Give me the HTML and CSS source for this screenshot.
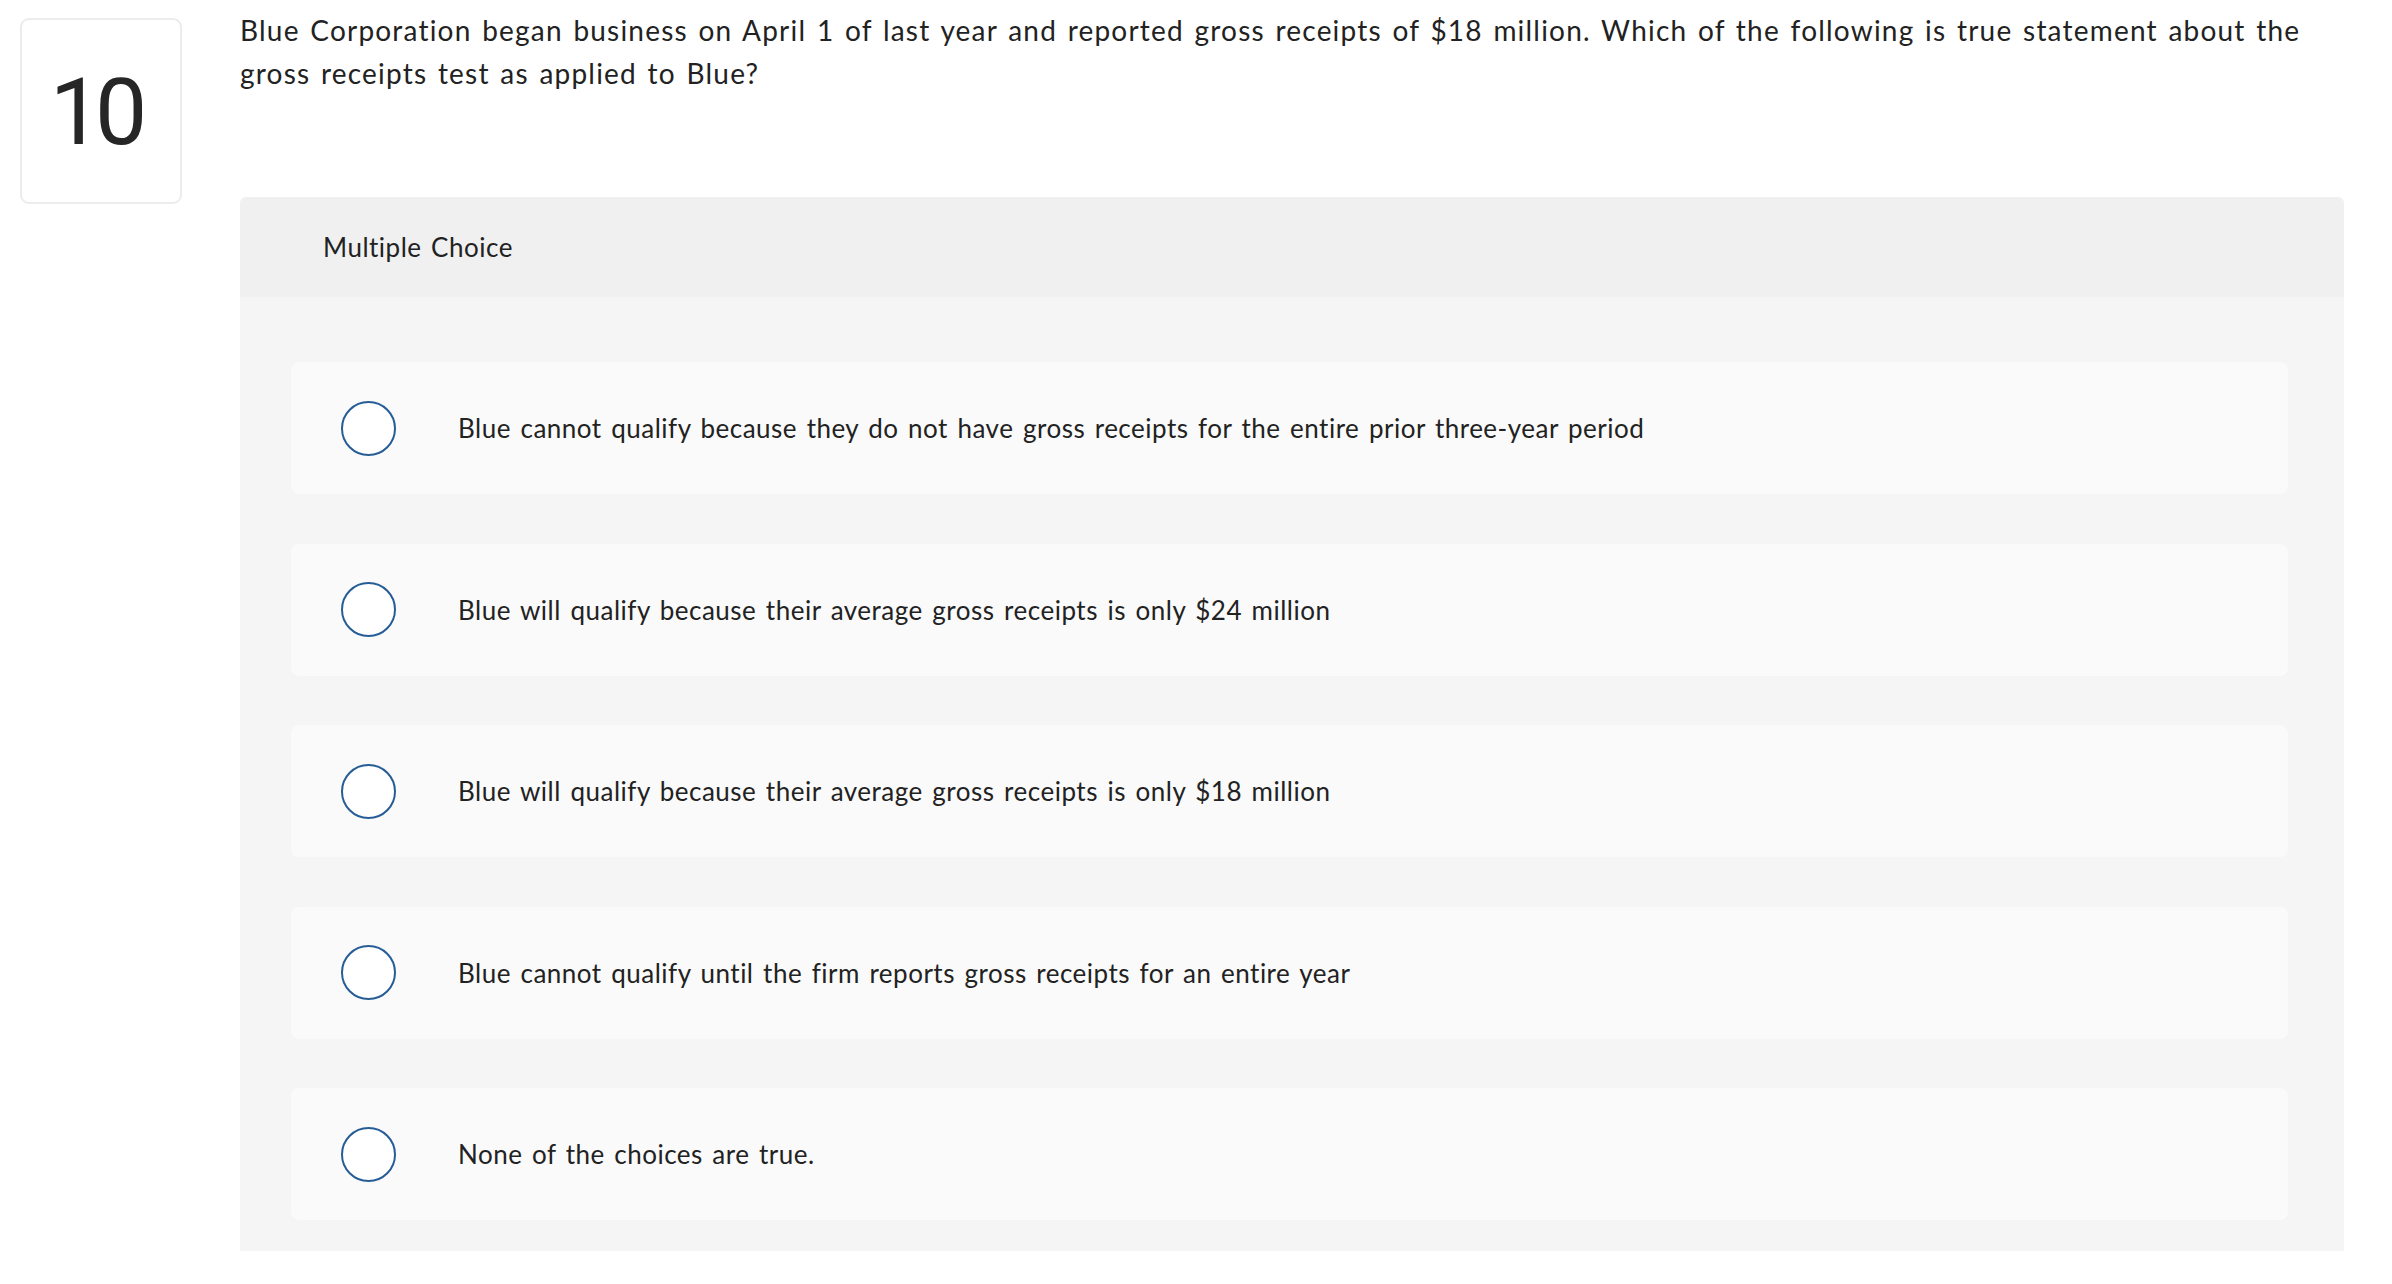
FILE: index.html
```html
<!DOCTYPE html>
<html lang="en">
<head>
<meta charset="utf-8">
<title>Question 10</title>
<link rel="stylesheet" href="styles.css">
</head>
<body>
<div class="question">
  <div class="num-box"><span class="num">10</span></div>
  <div class="content">
    <p class="stem">Blue Corporation began business on April 1 of last year and reported gross receipts of $18 million. Which of the following is true statement about the gross receipts test as applied to Blue?</p>
    <section class="panel">
      <header class="panel-head">Multiple Choice</header>
      <div class="panel-body">
        <div class="option"><span class="radio"></span><span class="opt-text">Blue cannot qualify because they do not have gross receipts for the entire prior three-year period</span></div>
        <div class="option"><span class="radio"></span><span class="opt-text">Blue will qualify because their average gross receipts is only $24 million</span></div>
        <div class="option"><span class="radio"></span><span class="opt-text">Blue will qualify because their average gross receipts is only $18 million</span></div>
        <div class="option"><span class="radio"></span><span class="opt-text">Blue cannot qualify until the firm reports gross receipts for an entire year</span></div>
        <div class="option"><span class="radio"></span><span class="opt-text">None of the choices are true.</span></div>
      </div>
    </section>
  </div>
</div>
</body>
</html>
```

FILE: styles.css
```css
* { box-sizing: border-box; }
html, body { margin: 0; padding: 0; background: #ffffff; }
body {
  font-family: "Lato", "Liberation Sans", sans-serif;
  color: #222222;
}
.question {
  display: flex;
  align-items: flex-start;
  padding: 9px 48px 0 20px;
}
.num-box {
  flex: 0 0 162px;
  height: 186px;
  margin-top: 9px;
  border: 2px solid #ececec;
  border-radius: 9px;
  display: flex;
  align-items: center;
  justify-content: center;
}
.num {
  font-family: "Roboto", "Open Sans", sans-serif;
  font-size: 93px;
  line-height: 1;
  color: #262626;
  letter-spacing: -7px;
  margin-left: -12px;
  margin-top: 2px;
}
.content {
  flex: 1;
  margin-left: 58px;
}
.stem {
  margin: 0 0 103px 0;
  font-size: 28px;
  line-height: 42.5px;
  letter-spacing: 1.2px;
  word-spacing: 2.3px;
}
.panel {
  border-radius: 6px 6px 0 0;
  overflow: hidden;
}
.panel-head {
  height: 100px;
  background: #f0f0f0;
  display: flex;
  align-items: center;
  padding-left: 83px;
  font-size: 26px;
  letter-spacing: 0.5px;
  word-spacing: 2.4px;
}
.panel-body {
  background: #f5f5f5;
  padding: 65px 56px 31px 51px;
  display: flex;
  flex-direction: column;
  gap: 49.5px;
}
.option {
  height: 132px;
  background: #fafafa;
  border-radius: 8px;
  display: flex;
  align-items: center;
  padding-left: 50px;
}
.radio {
  flex: 0 0 55px;
  height: 55px;
  border: 2.5px solid #265d96;
  border-radius: 50%;
  background: #ffffff;
}
.opt-text {
  margin-left: 62px;
  font-size: 26px;
  letter-spacing: 0.5px;
  word-spacing: 2.4px;
}
```
